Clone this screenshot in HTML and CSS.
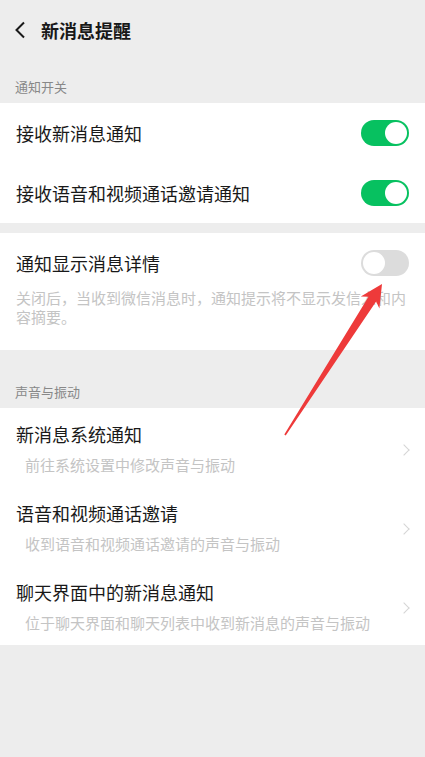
FILE: index.html
```html
<!DOCTYPE html>
<html lang="zh-CN">

<head>
    <meta charset="UTF-8">
    <meta name="viewport" content="width=device-width, initial-scale=1.0">
    <title>新消息提醒</title>

    <link rel="stylesheet" href="styles.css">
</head>

<body>
    <header class="top-bar">
        <svg class="back" width="12" height="18" viewBox="0 0 12 18">
            <path d="M10 1.5 L2.5 9 L10 16.5" fill="none" stroke="#191919" stroke-width="2" />
        </svg>
        <h1>新消息提醒</h1>
    </header>

    <p class="section-label first">通知开关</p>
    <div class="group">
        <div class="row">
            <span class="title">接收新消息通知</span>
            <span class="switch on"></span>
        </div>
        <div class="row">
            <span class="title">接收语音和视频通话邀请通知</span>
            <span class="switch on"></span>
        </div>
    </div>

    <div class="group detail">
        <div class="detail-head">
            <span class="title">通知显示消息详情</span>
            <span class="switch"></span>
        </div>
        <p class="desc">关闭后，当收到微信消息时，通知提示将不显示发信人和内容摘要。</p>
    </div>

    <p class="section-label">声音与振动</p>
    <div class="group">
        <div class="link-row">
            <div class="texts">
                <span class="title">新消息系统通知</span>
                <span class="sub">前往系统设置中修改声音与振动</span>
            </div>
            <span class="chevron"></span>
        </div>
        <div class="link-row">
            <div class="texts">
                <span class="title">语音和视频通话邀请</span>
                <span class="sub">收到语音和视频通话邀请的声音与振动</span>
            </div>
            <span class="chevron"></span>
        </div>
        <div class="link-row">
            <div class="texts">
                <span class="title">聊天界面中的新消息通知</span>
                <span class="sub">位于聊天界面和聊天列表中收到新消息的声音与振动</span>
            </div>
            <span class="chevron"></span>
        </div>
    </div>

    <!-- red annotation arrow drawn over the screenshot -->
    <svg class="arrow" width="425" height="757" viewBox="0 0 425 757">
        <polygon fill="#ee3a3a"
            points="284.3,434.6 368.5,296.7 360.8,296.6 382,284 379.4,308.4 376.1,301.5 285.7,435.4" />
    </svg>
</body>

</html>
```

FILE: styles.css
```css
* {
    margin: 0px;
    padding: 0px;
    box-sizing: border-box;
}

body {
    background-color: #ededed;
    font-family: "Noto Sans CJK SC", "Noto Sans", sans-serif;
    color: #191919;
    min-height: 757px;
    position: relative;
}

.top-bar {
    height: 60px;
    display: flex;
    align-items: center;
    padding-left: 14px;
    gap: 15px;
}

.top-bar h1 {
    font-size: 18px;
    font-weight: 700;
    line-height: 24px;
}

.section-label {
    font-size: 13px;
    line-height: 20px;
    color: #888888;
    padding: 32px 15px 6px;
}

.section-label.first {
    padding-top: 17px;
}

.group {
    background-color: white;
}

.title {
    font-size: 18px;
    line-height: 24px;
}

.row {
    height: 60px;
    display: flex;
    align-items: center;
    justify-content: space-between;
    padding: 0 16px;
}

.detail {
    margin-top: 10px;
    padding: 17px 16px 24px;
}

.detail-head {
    display: flex;
    align-items: center;
    justify-content: space-between;
}

.desc {
    margin-top: 12px;
    font-size: 15px;
    line-height: 19px;
    color: #c4c4c4;
}

.switch {
    width: 48px;
    height: 26px;
    border-radius: 13px;
    background-color: #dcdcdc;
    position: relative;
    flex-shrink: 0;
}

.switch::after {
    content: "";
    position: absolute;
    top: 2px;
    left: 2px;
    width: 22px;
    height: 22px;
    border-radius: 50%;
    background-color: white;
}

.switch.on {
    background-color: #07c160;
}

.switch.on::after {
    left: 24px;
}

.link-row {
    height: 79px;
    display: flex;
    align-items: center;
    justify-content: space-between;
    padding: 0 17px 0 16px;
}

.texts {
    display: flex;
    flex-direction: column;
    gap: 9px;
    padding-top: 2px;
}

.sub {
    font-size: 15px;
    line-height: 20px;
    color: #c4c4c4;
    padding-left: 9px;
}

.chevron {
    width: 8px;
    height: 8px;
    border-top: 1.5px solid #d5d5d5;
    border-right: 1.5px solid #d5d5d5;
    transform: rotate(45deg);
    margin-top: 4px;
}

.arrow {
    position: absolute;
    top: 0;
    left: 0;
    pointer-events: none;
}
```
